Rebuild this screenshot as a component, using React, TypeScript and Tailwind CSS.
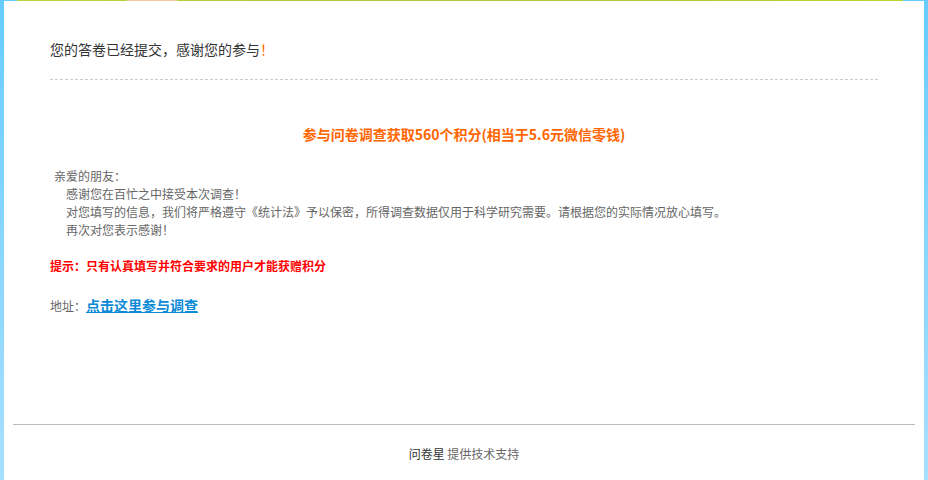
import React from "react";

const cjk = '"Microsoft YaHei", "Noto Sans CJK SC", "Noto Sans", sans-serif';

export default function App() {
  return (
    <div
      className="h-[480px] w-full overflow-hidden flex flex-col bg-gradient-to-b from-[#66ccff] to-[#a6e0ff]"
      style={{ fontFamily: cjk }}
    >
      <div className="h-px ml-[17px] mr-[25px] bg-gradient-to-r from-[#b8d43a] via-[#a9c93a] to-[#b7d42e] relative">
        <div className="absolute left-[110px] top-0 h-px w-[50px] bg-[#f2c9a0]" />
      </div>
      <div className="mx-[4px] flex-1 bg-white flex flex-col">
        <div className="px-[46px] pt-[38px]">
          <div className="text-[14px] leading-[20px] text-[#333]">
            您的答卷已经提交，感谢您的参与<span className="text-[#ff6a00]">！</span>
          </div>
          <div className="mt-[20px] border-b border-dashed border-[#cccccc]" />
          <div className="mt-[44px] text-center text-[14px] leading-[20px] font-bold text-[#ff6600]">
            参与问卷调查获取560个积分(相当于5.6元微信零钱)
          </div>
          <div className="mt-[23px] text-[12px] leading-[18px] text-[#666] pl-[4px]">
            <div>亲爱的朋友：</div>
            <div className="pl-[12px]">感谢您在百忙之中接受本次调查！</div>
            <div className="pl-[12px]">
              对您填写的信息，我们将严格遵守《统计法》予以保密，所得调查数据仅用于科学研究需要。请根据您的实际情况放心填写。
            </div>
            <div className="pl-[12px]">再次对您表示感谢！</div>
          </div>
          <div className="mt-[18px] text-[12px] leading-[18px] font-bold text-[#ff0000]">
            提示：只有认真填写并符合要求的用户才能获赠积分
          </div>
          <div className="mt-[20px] text-[12px] leading-[20px] text-[#666]">
            地址：
            <a href="#" className="text-[14px] font-bold text-[#0a8ad6] underline">
              点击这里参与调查
            </a>
          </div>
        </div>
        <div className="flex-1" />
        <div className="mx-[9px] border-t border-[#bbbbbb]" />
        <div className="h-[55px] pt-[19px] text-center text-[12px] leading-[20px]">
          <span className="text-[#333]">问卷星</span>
          <span className="text-[#666]"> 提供技术支持</span>
        </div>
      </div>
    </div>
  );
}
